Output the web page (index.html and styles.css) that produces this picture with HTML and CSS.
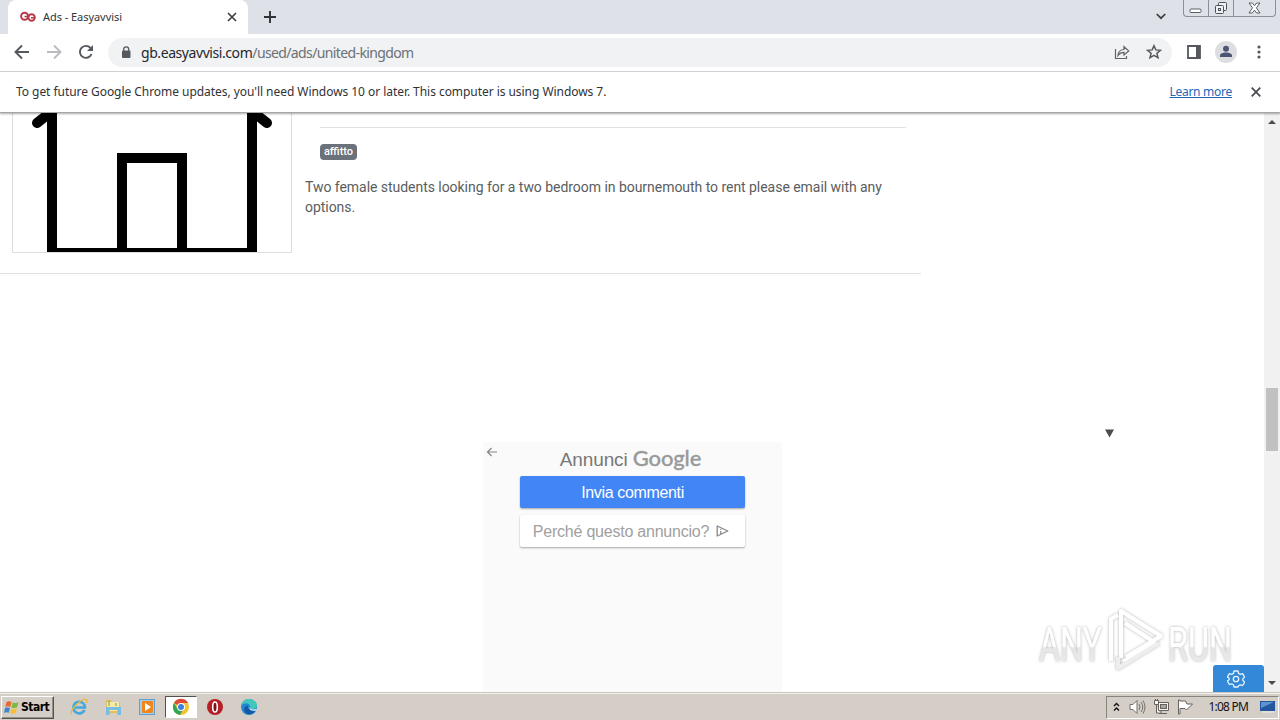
FILE: index.html
```
<!DOCTYPE html>
<html lang="en">
<head>
<meta charset="utf-8">
<title>Ads - Easyavvisi</title>
<link rel="stylesheet" href="styles.css">
</head>
<body>
<div class="screen">
  <header class="tabstrip">
    <div class="tab">
      <svg class="favicon" width="16" height="12" viewBox="0 0 16 12" fill="none" stroke="#b83b4b" stroke-width="2"><circle cx="4.600" cy="5.200" r="3.500"/><circle cx="11.600" cy="6.500" r="3.200"/><path d="M4.500 5.500H8M11 6.700h4" stroke-width="1.500"/></svg>
      <span class="tab-title">Ads - Easyavvisi</span>
      <svg class="tab-close" width="10" height="10" viewBox="0 0 10 10" stroke="#3c4043" stroke-width="1.7"><path d="M1 1l8 8M9 1L1 9"/></svg>
    </div>
    <svg class="new-tab" width="12" height="12" viewBox="0 0 12 12" stroke="#2f3338" stroke-width="1.9"><path d="M6 0v12M0 6h12"/></svg>
    <svg class="chevron" width="10" height="7" viewBox="0 0 10 7" fill="none" stroke="#3c4043" stroke-width="1.7"><path d="M.7 1L5 5.2 9.3 1"/></svg>
    <div class="window-buttons">
      <span class="wb"><svg width="14" height="6" viewBox="0 0 14 6" fill="#fff" stroke="#5c6068"><rect x="1" y="1" width="11" height="3.5" rx="1"/></svg></span>
      <span class="wb"><svg width="14" height="14" viewBox="0 0 14 14" fill="#eef0f3" stroke="#4c5058"><rect x="4.5" y="1.500" width="8" height="8" rx="1"/><rect x="1.500" y="4.5" width="8" height="8" rx="1"/><rect x="4.500" y="7.500" width="2" height="2"/></svg></span>
      <span class="wb wb-close"><svg width="13" height="12" viewBox="0 0 13 12" fill="#fff" stroke="#5a5e66"><path d="M1 1h3.300l2.200 2.700L8.700 1H12L8.400 5.900 12 11H8.700L6.500 8.200 4.300 11H1l3.500-5.100z"/></svg></span>
    </div>
  </header>

  <nav class="toolbar">
    <svg class="nav-icon" width="16" height="16" viewBox="0 0 16 16" fill="none" stroke="#55585c" stroke-width="1.9"><path d="M15 8H2M8 1.500L1.500 8 8 14.500"/></svg>
    <svg class="nav-icon" width="16" height="16" viewBox="0 0 16 16" fill="none" stroke="#b9bbbe" stroke-width="1.900"><path d="M1 8h13M8 1.500L14.500 8 8 14.500"/></svg>
    <svg class="nav-icon" width="16" height="16" viewBox="0 0 16 16" fill="none" stroke="#55585c" stroke-width="1.900"><path d="M13.500 10A6 6 0 1 1 12.400 3.900L14 5.500"/><path d="M15 1v6H9z" fill="#55585c" stroke="none"/></svg>
    <div class="omnibox">
      <svg class="lock" width="10" height="13" viewBox="0 0 10 13"><rect x="1" y="4.500" width="8.500" height="7.500" rx="1" fill="#55585c"/><path d="M2.700 5V3.300a2.500 2.500 0 0 1 5 0V5" fill="none" stroke="#55585c" stroke-width="1.300"/></svg>
      <span class="url"><span class="host">gb.easyavvisi.com</span><span class="path">/used/ads/united-kingdom</span></span>
      <svg class="share" width="16" height="15" viewBox="0 0 16 15" fill="none" stroke="#606368" stroke-width="1.200"><path d="M1.500 4v9.500h11V11M4 10.500C4.500 6.500 7 4.500 10 4.500V1.700l4.700 4.200L10 10V7.300C7.500 7.300 5.700 8.200 4 10.500z"/></svg>
      <svg class="star" width="16" height="16" viewBox="0 0 16 16" fill="none" stroke="#55585c" stroke-width="1.500"><path d="M8 1.700l1.800 4.200 4.600.4-3.500 3 1.100 4.500L8 11.400l-4 2.400 1.100-4.500-3.500-3 4.600-.4z"/></svg>
    </div>
    <svg class="panel" width="14" height="14" viewBox="0 0 14 14"><path d="M1 1h12v12H1z" fill="none" stroke="#55585c" stroke-width="1.800"/><path d="M9 1h4v12H9z" fill="#55585c"/></svg>
    <svg class="avatar" width="22" height="22" viewBox="0 0 22 22"><circle cx="11" cy="11" r="11" fill="#dcdee2"/><circle cx="11" cy="7.700" r="3" fill="#4c5672"/><path d="M5 16v-1.500c0-2 3-3 6-3s6 1 6 3V16z" fill="#4c5672"/></svg>
    <svg class="menu" width="4" height="14" viewBox="0 0 4 14" fill="#55585c"><circle cx="2" cy="2" r="1.600"/><circle cx="2" cy="7" r="1.600"/><circle cx="2" cy="12" r="1.600"/></svg>
  </nav>

  <div class="infobar">
    <span class="info-text">To get future Google Chrome updates, you'll need Windows 10 or later. This computer is using Windows 7.</span>
    <span class="learn">Learn more</span>
    <svg width="10" height="10" viewBox="0 0 10 10" stroke="#4b4e52" stroke-width="1.800"><path d="M.7.700l8.600 8.600M9.300.7L.7 9.300"/></svg>
  </div>

  <main class="viewport">
    <div class="page">
      <article class="listing">
        <div class="photo">
          <svg width="278" height="139" viewBox="0 0 278 139"><path d="M109 139V45h60v94" fill="none" stroke="#000" stroke-width="10"/><path d="M34 0v139h210V0h-10v135H44V0z"/><path d="M24 10L39-2M254 10L239-2" stroke="#000" stroke-width="10" stroke-linecap="round"/></svg>
        </div>
        <div class="details">
          <div class="rule"></div>
          <span class="badge">affitto</span>
          <p class="desc"><span class="line">Two female students looking for a two bedroom in bournemouth to rent please email with any</span><span class="line">options.</span></p>
        </div>
      </article>
      <section class="ad">
        <svg class="ad-back" width="12" height="10" viewBox="0 0 12 10" fill="none" stroke="#858585" stroke-width="1.200"><path d="M11 5H1.500M5.500 1l-4 4 4 4"/></svg>
        <div class="ad-head"><span class="ad-label">Annunci</span><span class="ad-google">Google</span></div>
        <div class="ad-btn primary"><span>Invia commenti</span></div>
        <div class="ad-btn plain"><span>Perché questo annuncio?</span><svg width="13" height="12" viewBox="0 0 13 12" fill="none" stroke="#888" stroke-width="1.300"><path d="M1.200 1v10L11.800 6z" stroke-linejoin="round"/><path d="M4.800 4v1M4.800 6v3"/></svg></div>
      </section>
      <svg class="marker" width="9" height="9" viewBox="0 0 9 9" fill="#4d4d4d"><path d="M0 .5h9L4.500 8.500z"/></svg>
      <svg class="watermark" width="204" height="72" viewBox="0 0 204 72">
        <defs>
          <linearGradient id="fade" x1="0" y1="0" x2="0" y2="1"><stop offset="0" stop-color="#fff"/><stop offset=".53" stop-color="#fff"/><stop offset=".56" stop-color="#e6e6e6"/><stop offset="1" stop-color="#ececec"/></linearGradient>
          <filter id="glow" x="-10%" y="-10%" width="120%" height="120%"><feDropShadow dx="0" dy="0" stdDeviation="1.800" flood-color="#777" flood-opacity=".6"/></filter>
        </defs>
        <g filter="url(#glow)">
          <g class="wm-text" fill="url(#fade)">
            <text x="5" y="55" textLength="63" lengthAdjust="spacingAndGlyphs">ANY</text>
            <text x="134" y="55" textLength="64" lengthAdjust="spacingAndGlyphs">RUN</text>
          </g>
          <g fill="none" stroke="#fff" stroke-width="4" stroke-linejoin="round">
            <path d="M87 52V5l40 25-35 21"/><path d="M91 17l29 19-31 20"/><path d="M84 9l-7 4v42"/><path d="M84 51v11l41-25" stroke="#eee"/>
          </g>
        </g>
      </svg>
      <div class="settings"><svg width="18" height="18" viewBox="0 0 18 18" fill="none" stroke="#e8f4ff" stroke-width="1.300" stroke-linejoin="round"><path d="M7 1h4l.6 2.500 1.600.9 2.400-.7 2 3.400-1.800 1.800v1.500l1.800 1.700-2 3.400-2.400-.7-1.600.9L11 17H7l-.6-2.300-1.600-.9-2.400.7-2-3.400L2.200 9.700V8.200L.4 6.900l2-3.300 2.400.7 1.600-.8z"/><circle cx="9" cy="9" r="2.700"/></svg></div>
    </div>
    <div class="scrollbar">
      <svg width="8" height="4" viewBox="0 0 8 4" fill="#4b4b4b"><path d="M0 4l4-4 4 4z"/></svg>
      <div class="thumb"></div>
      <svg width="8" height="4" viewBox="0 0 8 4" fill="#4b4b4b"><path d="M0 0l4 4 4-4z"/></svg>
    </div>
  </main>

  <footer class="taskbar">
    <div class="start">
      <svg width="16" height="15" viewBox="0 0 16 15"><path d="M2.500 2Q5 .5 7.500 2L6.300 7Q3.800 5.700 1.200 7z" fill="#e66a32"/><path d="M8.500 2.500q2.500 1.200 6-.3L13.200 7.300q-3 1.400-5.800.1z" fill="#80b843"/><path d="M1 8q2.500-1.400 5-.1L4.800 12.800Q2.500 11.500 0 12.800z" fill="#3e87cb"/><path d="M7.200 8.500q2.800 1.200 5.800-.2L11.700 13q-3 1.600-5.700.1z" fill="#f5bf39"/></svg>
      <span>Start</span>
    </div>
    <div class="quick">
      <div class="task"><svg width="18" height="18" viewBox="0 0 18 18"><path d="M14.500 12A5.800 5.800 0 1 1 15 9.500H4" fill="none" stroke="#42a8de" stroke-width="2.600"/><path d="M1.500 16C-.5 12 12-.5 16.500 1.800c1 .8.300 2-.7 3" fill="none" stroke="#e6b93e" stroke-width="1.300"/></svg></div>
      <div class="task"><svg width="18" height="18" viewBox="0 0 18 18"><path d="M2 2h5l1 2h8v11H2z" fill="#e6bd5c"/><path d="M3 4h12v9H3z" fill="#fae9a5"/><path d="M2 9h15v8h-3.500v-5h-8v5H2z" fill="#78bee3"/><path d="M5 3v5M12 5v3" stroke="#58a95a"/></svg></div>
      <div class="task"><svg width="18" height="18" viewBox="0 0 18 18"><rect x="1.500" y="1.500" width="15" height="15" fill="#a9cde8" stroke="#5fa0ce"/><rect x="4" y="3" width="11" height="12" rx="1" fill="#ef8720"/><path d="M7 5l6 4-6 4z" fill="#fff"/></svg></div>
      <div class="task active"><svg width="18" height="18" viewBox="0 0 18 18"><circle cx="9" cy="9" r="8" fill="#f4c430"/><path d="M9 9L2 5A8 8 0 0 1 16 5H9z" fill="#df4938"/><path d="M2 5a8 8 0 0 0 6 12l3.500-6L9 9 5 10z" fill="#35a456"/><circle cx="9" cy="9" r="4" fill="#fff"/><circle cx="9" cy="9" r="3" fill="#3f7fe0"/></svg></div>
      <div class="task"><svg width="18" height="18" viewBox="0 0 18 18"><circle cx="9" cy="9" r="8" fill="#b51e25"/><ellipse cx="9" cy="9" rx="2.300" ry="5" fill="#7f1117" stroke="#fff" stroke-width="1.600"/></svg></div>
      <div class="task"><svg width="18" height="18" viewBox="0 0 18 18"><circle cx="9" cy="9" r="8" fill="#2387cf"/><path d="M1 8C2 2 8-.5 13 2c4 2 5 6 3 8-2 2-6 1-6-1 1-3-5-6-9-1z" fill="#43c7bc"/><path d="M8 7.500c-1 4 3 6 7.500 5C12 18 5 17 4 12c0-3 2-4 4-4.500z" fill="#1658a8"/><path d="M10 8.500c-1 2 2 4 6 2.500l1 1c-4 2-9 0-7-3.500z" fill="#e9f7fa"/></svg></div>
    </div>
    <div class="tray">
      <svg width="7" height="10" viewBox="0 0 7 10" fill="none" stroke="#111" stroke-width="1.400"><path d="M1 4l2.500-2.500L6 4M1 8.500L3.500 6 6 8.500"/></svg>
      <svg class="speaker" width="17" height="16" viewBox="0 0 17 16" fill="#fff" stroke="#74716c"><path d="M1 5.500h3L8 1.500v13l-4-4H1z"/><path d="M10 5q2 3 0 6M12 3q3.500 5 0 10M14 1.500q4 6.500 0 13" fill="none"/></svg>
      <svg class="network" width="17" height="16" viewBox="0 0 17 16" fill="#f6f6f4" stroke="#65625e"><path d="M5.500 3.500h10v8h-10zM8 12v2M6 14.500h8"/><rect x="7.500" y="5.500" width="6" height="4" fill="#a8a7a4"/><path d="M1.500 1.500h4v4h-4zM3.500 6v8H6M2.500 0v2M4.500 0v2"/></svg>
      <svg class="flag" width="17" height="16" viewBox="0 0 17 16" fill="#fff" stroke="#65625e"><path d="M1.500 1v14h1.500V9.500h5l1.500 1.500L15.500 5H10L8.500 2H3V1z"/></svg>
      <span class="clock">1:08 PM</span>
      <svg class="desktop" width="15" height="12" viewBox="0 0 15 12"><rect width="15" height="10" fill="#2556a0"/><path d="M1 1h13L1 7z" fill="#5c94d4"/><path d="M2 11h12" stroke="#eee"/></svg>
    </div>
  </footer>
</div>
</body>
</html>
```
FILE: styles.css
```
* { box-sizing: border-box; }
body { margin: 0; overflow: hidden; background: #fff; font-family: "Noto Sans", "DejaVu Sans", sans-serif; }
svg { display: block; flex: none; }
.screen { width: 1280px; height: 720px; display: flex; flex-direction: column; overflow: hidden; }
.tabstrip { height: 34px; flex: none; background: #dee1e8; display: flex; align-items: flex-start; padding-left: 8px; }
.tab { width: 240px; height: 34px; background: #fff; border-radius: 8px 8px 0 0; display: flex; align-items: center; padding: 0 11px 0 12px; }
.tab-title { margin-left: 7px; font-size: 11px; line-height: 16px; letter-spacing: -.05px; color: #33363a; white-space: nowrap; }
.tab-close { margin-left: auto; }
.new-tab { margin: 11px 0 0 16px; }
.chevron { margin: 13px 0 0 auto; }
.window-buttons { display: flex; width: 93px; height: 17px; margin: 0 4px 0 17px; border: 1px solid #8b8f98; border-top: 0; border-radius: 0 0 4px 4px; }
.wb { width: 25px; display: flex; justify-content: center; align-items: center; border-right: 1px solid #8b8f98; }
.wb:first-child svg { margin-top: 5px; }
.wb-close { width: 41px; border-right: 0; }
.toolbar { height: 38px; flex: none; display: flex; align-items: center; padding: 0 19px 1px 14px; border-bottom: 1px solid #d5d7da; }
.nav-icon { margin-right: 16px; }
.omnibox { width: 1064px; height: 29px; margin-left: -2px; padding: 0 10px 0 13px; border-radius: 15px; background: #f0f2f4; display: flex; align-items: center; }
.url { margin: 1px 0 0 10px; font-size: 14px; line-height: 20px; white-space: nowrap; }
.host { color: #25282c; letter-spacing: -.43px; }
.path { color: #6b7076; letter-spacing: -.62px; }
.share { margin-left: auto; }
.star { margin-left: 16px; }
.panel { margin-left: 15px; }
.avatar { margin-left: 14px; }
.menu { margin-left: auto; }
.infobar { height: 41px; flex: none; display: flex; align-items: center; padding: 0 19px 1px 16px; font-size: 12px; color: #303236; border-bottom: 1px solid #a6a6a6; box-shadow: 0 1px 2px #0005; z-index: 1; }
.info-text { white-space: nowrap; letter-spacing: -.05px; }
.learn { margin: 0 19px 0 auto; color: #2467b8; text-decoration: underline; white-space: nowrap; letter-spacing: -.27px; }
.viewport { height: 579px; flex: none; display: flex; }
.page { width: 1264px; position: relative; overflow: hidden; }
.listing { width: 921px; height: 161px; display: flex; padding-left: 12px; border-bottom: 1px solid #dfe1e3; }
.photo { width: 280px; height: 140px; border: 1px solid #ddd; border-top: 0; }
.details { width: 601px; margin-left: 13px; padding-top: 14px; }
.rule { height: 1px; margin-left: 15px; background: #dfe1e3; }
.badge { display: block; width: 37px; height: 16px; margin: 16px 0 0 15px; border-radius: 4px; background: #6c727a; color: #fff; font: 500 11px/15px Roboto, sans-serif; text-align: center; }
.desc { margin: 17px 0 0; font: 14px/20px Roboto, sans-serif; color: #5a5d60; letter-spacing: -.04px; }
.line { display: block; white-space: nowrap; }
.ad { width: 299px; height: 250px; margin: 168px 0 0 483px; background: #fafafa; position: relative; display: flex; flex-direction: column; padding: 4px 37px; font-family: "Liberation Sans", sans-serif; }
.ad-back { position: absolute; left: 3px; top: 5px; }
.ad-head { height: 30px; display: flex; gap: 5px; justify-content: center; line-height: 28px; color: #777; padding-right: 4px; white-space: nowrap; }
.ad-label { font-size: 19px; letter-spacing: -.1px; }
.ad-google { font: 500 22px/24px Lato, sans-serif; color: #999; -webkit-text-stroke: .3px #999; letter-spacing: -.1px; }
.ad-btn { height: 32px; flex: none; border-radius: 2px; font-size: 16px; box-shadow: 0 1px 2px #0005; display: flex; align-items: center; justify-content: center; gap: 7px; white-space: nowrap; }
.ad-btn span { padding-top: 2px; }
.primary { background: #4285f4; color: #fff; letter-spacing: -.35px; }
.plain { background: #fff; color: #a0a0a0; margin-top: 7px; padding-right: 3px; letter-spacing: -.22px; }
.marker { position: absolute; left: 1105px; top: 316px; }
.watermark { position: absolute; left: 1034px; top: 493px; overflow: visible; }
.wm-text { font-family: Roboto, sans-serif; font-size: 49px; }
.settings { position: absolute; right: 0; bottom: 0; width: 51px; height: 27px; border-radius: 3px 3px 0 0; background: #3488d8; display: flex; align-items: center; justify-content: center; padding-right: 5px; }
.scrollbar { width: 16px; background: #f1f1f1; display: flex; flex-direction: column; align-items: center; padding: 7px 0; }
.thumb { width: 12px; height: 63px; margin: 264px 0 auto; background: #c1c1c1; }
.taskbar { height: 28px; flex: none; display: flex; align-items: center; background: #d5cec6; border-top: 1px solid #c9c5c0; box-shadow: inset 0 1px #f4f2ef; padding: 1px 1px 0; }
.start { width: 53px; height: 23px; display: flex; align-items: center; gap: 1px; padding-left: 2px; border: 1px solid; border-color: #fff #56524d #56524d #fff; box-shadow: inset -1px -1px #969089; font: bold 12px/18px "DejaVu Sans Condensed", "DejaVu Sans", sans-serif; color: #000; }
.start span { letter-spacing: -.5px; }
.quick { display: flex; gap: 2px; margin-left: 9px; }
.task { width: 32px; height: 22px; display: flex; align-items: center; justify-content: center; }
.active { background: #fff; border: 1px solid; border-color: #55514c #fff #fff #55514c; }
.tray { width: 173px; height: 23px; margin-left: auto; display: flex; align-items: center; padding: 0 3px 0 6px; border: 1px solid; border-color: #89847d #fff #fff #89847d; }
.speaker { margin-left: 9px; }
.network { margin-left: 7px; }
.flag { margin-left: 7px; }
.clock { margin-left: auto; font-size: 12px; line-height: 18px; letter-spacing: -.8px; color: #111; white-space: nowrap; }
.desktop { margin-left: 12px; }
```
